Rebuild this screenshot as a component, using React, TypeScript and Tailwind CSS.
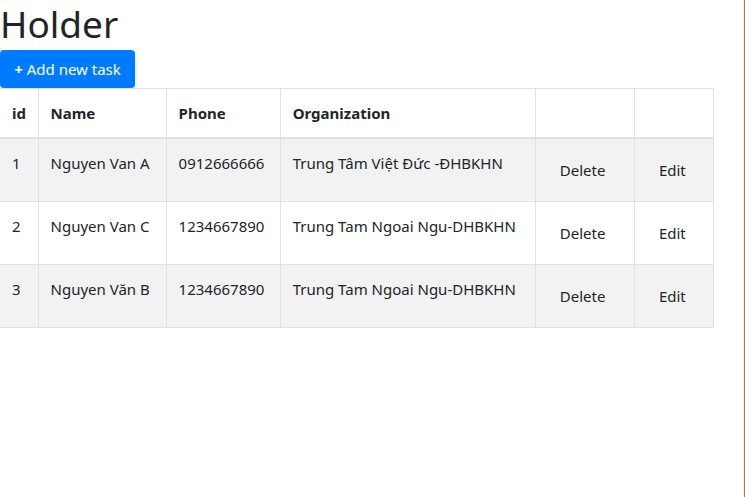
const rows = [
  { id: 1, name: "Nguyen Van A", phone: "0912666666", org: "Trung Tâm Việt Đức -ĐHBKHN" },
  { id: 2, name: "Nguyen Van C", phone: "1234667890", org: "Trung Tam Ngoai Ngu-DHBKHN" },
  { id: 3, name: "Nguyen Văn B", phone: "1234667890", org: "Trung Tam Ngoai Ngu-DHBKHN" },
];

export default function App() {
  return (
    <div
      className="min-h-screen w-full border-r border-[#f05454] bg-white text-[#212529]"
      style={{ fontFamily: '"Noto Sans", "Open Sans", sans-serif' }}
    >
      <h1 className="mb-[2px] text-[37px] leading-[48px] font-normal">Holder</h1>
      <button className="h-[38px] w-[135px] rounded bg-[#007bff] text-center text-[15px] leading-6 text-white">
        <span className="font-bold">+</span> Add new task
      </button>
      <table className="w-[714px] table-fixed border-collapse text-[15px] leading-6">
        <colgroup>
          <col className="w-[38px]" />
          <col className="w-[128px]" />
          <col className="w-[114px]" />
          <col className="w-[255px]" />
          <col className="w-[99px]" />
          <col className="w-[79px]" />
        </colgroup>
        <thead>
          <tr>
            <th className="border border-l-0 border-b-2 border-[#dee2e6] p-3 text-left font-bold">id</th>
            <th className="border border-b-2 border-[#dee2e6] p-3 text-left font-bold">Name</th>
            <th className="border border-b-2 border-[#dee2e6] p-3 text-left font-bold">Phone</th>
            <th className="border border-b-2 border-[#dee2e6] p-3 text-left font-bold">Organization</th>
            <th className="border border-b-2 border-[#dee2e6] p-3"></th>
            <th className="border border-b-2 border-[#dee2e6] p-3"></th>
          </tr>
        </thead>
        <tbody>
          {rows.map((r, i) => (
            <tr key={r.id} className={i % 2 === 0 ? "bg-[#f2f2f2]" : "bg-white"}>
              <td className="border border-l-0 border-[#dee2e6] p-3 align-top">{r.id}</td>
              <td className="border border-[#dee2e6] p-3 align-top whitespace-nowrap">{r.name}</td>
              <td className="border border-[#dee2e6] p-3 align-top">{r.phone}</td>
              <td className="border border-[#dee2e6] p-3 align-top whitespace-nowrap">{r.org}</td>
              <td className="border border-[#dee2e6] p-3 align-top">
                <button className="h-[38px] px-3 leading-6">Delete</button>
              </td>
              <td className="border border-[#dee2e6] p-3 align-top">
                <button className="h-[38px] px-3 leading-6">Edit</button>
              </td>
            </tr>
          ))}
        </tbody>
      </table>
    </div>
  );
}
